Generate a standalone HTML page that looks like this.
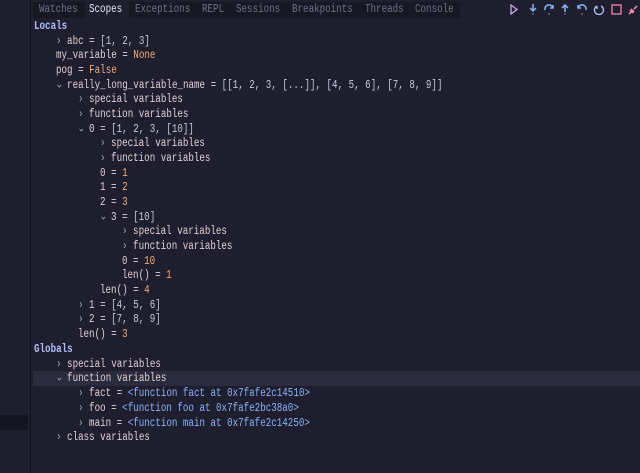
<!DOCTYPE html><html><head><style>
body{margin:0;width:640px;height:473px;background:#1e1e2e;overflow:hidden;position:relative;font-family:"Liberation Mono",monospace;font-size:11.5px}
.sep{position:absolute;left:30px;top:0;width:1px;height:473px;background:#11111b}
.band{position:absolute;left:0;top:415px;width:28px;height:15px;background:#15151f}
.tabs{position:absolute;left:33px;top:2px;width:427px;height:16px;background:#181825}
.tab{position:absolute;top:3px;color:#6c7086;transform:scaleX(0.8);transform-origin:left top;white-space:pre;line-height:14px}
.r{position:absolute;white-space:pre;color:#e0d0d6;line-height:14px;transform:scaleX(0.8);transform-origin:left top;margin-top:2px}
.v{color:#c4c8de}.n{color:#f5ab7a}.h{color:#b4befe;font-weight:bold}.f{color:#89b4fa}.c{color:#a6adc8}
.d{display:inline-block;transform:rotate(90deg);color:#a6adc8}
.hl{position:absolute;left:33px;top:371px;width:607px;height:15px;background:#2a2b3c}
.sel{position:absolute;left:85px;top:2px;width:44px;height:16px;background:#1e1e2e}
svg{position:absolute;top:4px}
</style></head><body>
<div class="sep"></div><div class="band"></div>
<div class="tabs"></div><div class="sel"></div>
<div class="tab" style="left:39px">Watches</div>
<div class="tab" style="left:89px;color:#e6e9f5">Scopes</div>
<div class="tab" style="left:135px">Exceptions</div>
<div class="tab" style="left:202px">REPL</div>
<div class="tab" style="left:236px">Sessions</div>
<div class="tab" style="left:292px">Breakpoints</div>
<div class="tab" style="left:365px">Threads</div>
<div class="tab" style="left:415px">Console</div>
<svg style="left:509px" width="10" height="11"><path d="M2 1 L8 5.5 L2 10 Z" fill="none" stroke="#cba6f7" stroke-width="1.3"/></svg>
<svg style="left:528px" width="10" height="11"><path d="M5 0 V7 M2 4 L5 7 L8 4 M5 9.5 v1" stroke="#89b4fa" stroke-width="1.5" fill="none"/></svg>
<svg style="left:543px" width="12" height="11"><path d="M2 6 A4 4 0 0 1 10 4 M7 4 H10 V1 M6 9.5 v1" stroke="#89b4fa" stroke-width="1.5" fill="none"/></svg>
<svg style="left:560px" width="10" height="11"><path d="M5 8 V1 M2 4 L5 1 L8 4 M5 9.5 v1" stroke="#89b4fa" stroke-width="1.5" fill="none"/></svg>
<svg style="left:576px" width="12" height="11"><path d="M10 6 A4 4 0 0 0 2 4 M5 4 H2 V1 M6 9.5 v1" stroke="#89b4fa" stroke-width="1.5" fill="none"/></svg>
<svg style="left:593px" width="12" height="12"><path d="M4 2 A4.5 4.5 0 1 0 8 2 M4 2 V5" stroke="#b4befe" stroke-width="1.3" fill="none"/></svg>
<svg style="left:611px" width="11" height="11"><rect x="1" y="1" width="9" height="9" fill="none" stroke="#f38ba8" stroke-width="1.3"/></svg>
<svg style="left:627px" width="12" height="12"><path d="M2 10 L5 7 M7 5 L10 2 M4 5 L7 8 M3 6 L6 9" stroke="#f38ba8" stroke-width="1.6" fill="none"/></svg>
<div class="hl"></div>
<div class="r h" style="left:34px;top:18px">Locals</div>
<div class="r" style="left:56px;top:33px"><span class="c">›</span> abc = <span class="v">[1, 2, 3]</span></div>
<div class="r" style="left:56px;top:47px">my_variable = <span class="n">None</span></div>
<div class="r" style="left:56px;top:62px">pog = <span class="n">False</span></div>
<div class="r" style="left:56px;top:77px"><span class="d">›</span> really_long_variable_name = <span class="v">[[1, 2, 3, [...]], [4, 5, 6], [7, 8, 9]]</span></div>
<div class="r" style="left:78px;top:91px"><span class="c">›</span> special variables</div>
<div class="r" style="left:78px;top:106px"><span class="c">›</span> function variables</div>
<div class="r" style="left:78px;top:121px"><span class="d">›</span> 0 = <span class="v">[1, 2, 3, [10]]</span></div>
<div class="r" style="left:100px;top:135px"><span class="c">›</span> special variables</div>
<div class="r" style="left:100px;top:150px"><span class="c">›</span> function variables</div>
<div class="r" style="left:100px;top:165px">0 = <span class="n">1</span></div>
<div class="r" style="left:100px;top:179px">1 = <span class="n">2</span></div>
<div class="r" style="left:100px;top:194px">2 = <span class="n">3</span></div>
<div class="r" style="left:100px;top:209px"><span class="d">›</span> 3 = <span class="v">[10]</span></div>
<div class="r" style="left:122px;top:223px"><span class="c">›</span> special variables</div>
<div class="r" style="left:122px;top:238px"><span class="c">›</span> function variables</div>
<div class="r" style="left:122px;top:253px">0 = <span class="n">10</span></div>
<div class="r" style="left:122px;top:267px">len() = <span class="n">1</span></div>
<div class="r" style="left:100px;top:282px">len() = <span class="n">4</span></div>
<div class="r" style="left:78px;top:297px"><span class="c">›</span> 1 = <span class="v">[4, 5, 6]</span></div>
<div class="r" style="left:78px;top:311px"><span class="c">›</span> 2 = <span class="v">[7, 8, 9]</span></div>
<div class="r" style="left:78px;top:326px">len() = <span class="n">3</span></div>
<div class="r h" style="left:34px;top:341px">Globals</div>
<div class="r" style="left:56px;top:356px"><span class="c">›</span> special variables</div>
<div class="r" style="left:56px;top:370px"><span class="d">›</span> function variables</div>
<div class="r" style="left:78px;top:385px"><span class="c">›</span> fact = <span class="f">&lt;function fact at 0x7fafe2c14510&gt;</span></div>
<div class="r" style="left:78px;top:400px"><span class="c">›</span> foo = <span class="f">&lt;function foo at 0x7fafe2bc38a0&gt;</span></div>
<div class="r" style="left:78px;top:415px"><span class="c">›</span> main = <span class="f">&lt;function main at 0x7fafe2c14250&gt;</span></div>
<div class="r" style="left:56px;top:429px"><span class="c">›</span> class variables</div>
</body></html>
